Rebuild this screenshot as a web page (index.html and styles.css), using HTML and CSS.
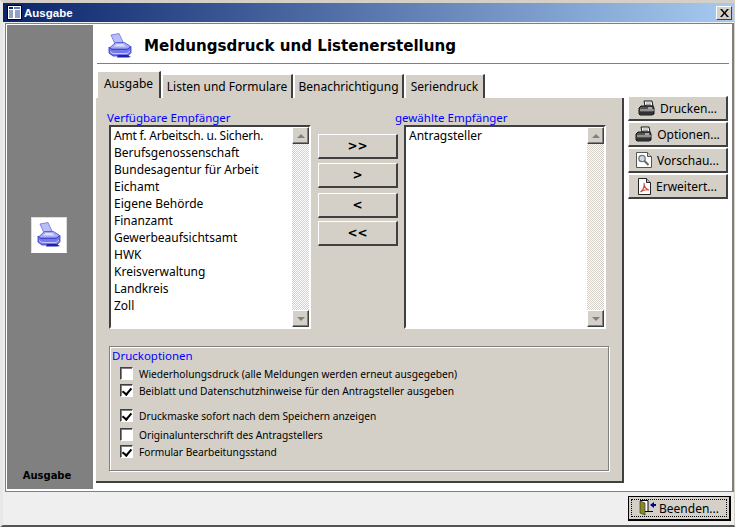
FILE: index.html
```html
<!DOCTYPE html>
<html lang="de">
<head>
<meta charset="utf-8">
<title>Ausgabe</title>
<link rel="stylesheet" href="styles.css">
</head>
<body>
<svg class="defs" width="0" height="0">
  <defs>
    <symbol id="blue-printer" viewBox="0 0 24 26">
      <path d="M3 2l8-1.500 4 8.500-8 2z" fill="#b9bdf8" stroke="#6a70e0" stroke-width=".8"/>
      <path d="M1.500 15l6-5.500h9L22 13v3H1.500z" fill="#a5a9f3" stroke="#4a50d0" stroke-width=".8"/>
      <path d="M6 13l3-2h6l3 2.500H7z" fill="#dcdefc"/>
      <path d="M1 14l3 2.500h15l4-3v6l-3 3.500H5l-4-3z" fill="#7379ea" stroke="#2c32c0" stroke-width=".8"/>
      <path d="M2 18.500l3 2h14l3-2.500" fill="none" stroke="#c3c6fa"/>
      <path d="M10 22h9l4 2-3 .500H9z" fill="#1d22a8"/>
    </symbol>
    <symbol id="black-printer" viewBox="0 0 17 16">
      <path d="M6 1h8l1 5H7z" fill="#fff" stroke="#000" stroke-width=".9"/>
      <path d="M8 3h5M8 4.500h5" stroke="#777" stroke-width=".7"/>
      <path d="M3 6h12l1 2v6l-2 1H2l-1-1V8z" fill="#555" stroke="#000" stroke-width=".9"/>
      <path d="M2 10h14" stroke="#d4d0c8"/>
      <path d="M10 8h4" stroke="#fff"/>
      <path d="M2 13h14" stroke="#111"/>
    </symbol>
  </defs>
</svg>
<div class="window">
  <header class="titlebar">
    <svg class="app-icon" width="15" height="15" viewBox="0 0 15 15">
      <rect x=".5" y=".5" width="14" height="14" fill="#fff" stroke="#000"/>
      <rect x="2" y="2" width="4" height="2" fill="#0a246a"/>
      <rect x="7" y="2" width="6" height="2" fill="#5a7cc0"/>
      <path d="M2 6h4M2 8h4M2 10h4M2 12h4M8 6h5M8 8h5M8 10h5M8 12h5" stroke="#26408c"/>
    </svg>
    <span class="title-text">Ausgabe</span>
    <button class="close-btn" type="button" aria-label="Schließen">
      <svg width="9" height="8" viewBox="0 0 9 8"><path d="M0 0h2l2.500 3L7 0h2L5.500 4 9 8H7L4.500 5 2 8H0l3.500-4z" fill="#000"/></svg>
    </button>
  </header>

  <div class="frame">
    <aside class="sidebar">
      <div class="side-icon"><svg width="24" height="26"><use href="#blue-printer"/></svg></div>
      <div class="side-label">Ausgabe</div>
    </aside>

    <main class="content">
      <div class="heading">
        <svg width="24" height="26"><use href="#blue-printer"/></svg>
        <h1>Meldungsdruck und Listenerstellung</h1>
      </div>

      <div class="workarea">
        <section class="tabs-col">
          <nav class="tabs">
            <span class="tab active">Ausgabe</span>
            <span class="tab t-listen">Listen und Formulare</span>
            <span class="tab t-benach">Benachrichtigung</span>
            <span class="tab t-serie">Seriendruck</span>
          </nav>

          <div class="panel">
            <div class="lists">
              <div class="list-col">
                <div class="caption">Verfügbare Empfänger</div>
                <div class="listbox">
                  <ul>
                    <li class="tight">Amt f. Arbeitsch. u. Sicherh.</li>
                    <li>Berufsgenossenschaft</li>
                    <li>Bundesagentur für Arbeit</li>
                    <li>Eichamt</li>
                    <li>Eigene Behörde</li>
                    <li>Finanzamt</li>
                    <li>Gewerbeaufsichtsamt</li>
                    <li>HWK</li>
                    <li>Kreisverwaltung</li>
                    <li>Landkreis</li>
                    <li>Zoll</li>
                  </ul>
                  <div class="scrollbar">
                    <span class="sb-btn"><i class="arrow-up"></i></span>
                    <span class="sb-track"></span>
                    <span class="sb-btn"><i class="arrow-down"></i></span>
                  </div>
                </div>
              </div>

              <div class="move-col">
                <button class="move" type="button">&gt;&gt;</button>
                <button class="move" type="button">&gt;</button>
                <button class="move m3" type="button">&lt;</button>
                <button class="move m4" type="button">&lt;&lt;</button>
              </div>

              <div class="list-col right">
                <div class="caption">gewählte Empfänger</div>
                <div class="listbox">
                  <ul>
                    <li>Antragsteller</li>
                  </ul>
                  <div class="scrollbar">
                    <span class="sb-btn"><i class="arrow-up"></i></span>
                    <span class="sb-track"></span>
                    <span class="sb-btn"><i class="arrow-down"></i></span>
                  </div>
                </div>
              </div>
            </div>

            <fieldset class="options">
              <div class="caption opt-title">Druckoptionen</div>
              <div class="opt"><span class="check"></span>Wiederholungsdruck (alle Meldungen werden erneut ausgegeben)</div>
              <div class="opt"><span class="check on"></span>Beiblatt und Datenschutzhinweise für den Antragsteller ausgeben</div>
              <div class="opt gap"><span class="check on"></span>Druckmaske sofort nach dem Speichern anzeigen</div>
              <div class="opt gap2"><span class="check"></span>Originalunterschrift des Antragstellers</div>
              <div class="opt"><span class="check on"></span>Formular Bearbeitungsstand</div>
            </fieldset>
          </div>
        </section>

        <div class="actions">
          <button class="action" type="button"><svg width="17" height="16"><use href="#black-printer"/></svg><span>Drucken...</span></button>
          <button class="action" type="button"><svg width="17" height="16"><use href="#black-printer"/></svg><span>Optionen...</span></button>
          <button class="action" type="button">
            <svg width="16" height="16" viewBox="0 0 16 16"><path d="M.5.500h11l4 4v11H.5z" fill="#fff" stroke="#555"/><path d="M11.500.500v4h4" fill="#ccc" stroke="#555"/><circle cx="6" cy="6.500" r="3.200" fill="#cfd8e8" stroke="#777" stroke-width="1.300"/><path d="M8.500 9l4 4" stroke="#666" stroke-width="2"/></svg>
            <span>Vorschau...</span></button>
          <button class="action" type="button">
            <svg width="13" height="17" viewBox="0 0 13 17"><path d="M.5.500h8l4 4v12H.5z" fill="#fff" stroke="#222"/><path d="M8.500.500v4h4" fill="#bbb" stroke="#222"/><path d="M2.500 14C5 12 6.500 8 6 5c0 3 2 6 5 7-3-.5-6 0-8.500 2z" fill="none" stroke="#d8443c" stroke-width="1.100"/></svg>
            <span>Erweitert...</span></button>
        </div>
      </div>
    </main>
  </div>

  <footer class="footer">
    <button class="quit" type="button">
      <span class="quit-inner">
        <svg width="17" height="16" viewBox="0 0 17 16"><path d="M1 .500h8v11H1" fill="#fff" stroke="#000"/><path d="M1 1l5 2v12l-5-2z" fill="#8a8a20" stroke="#333" stroke-width=".7"/><path d="M9 11.500H14" stroke="#000"/><path d="M11 5l4-3v2h2v2h-2v2z" fill="#00008b"/></svg>
        <span>Beenden...</span>
      </span>
    </button>
  </footer>
</div>
</body>
</html>
```
FILE: styles.css
```css
* { box-sizing: border-box; }
html, body { margin: 0; padding: 0; }
body {
  width: 735px;
  height: 527px;
  overflow: hidden;
  font-family: Tahoma, "Noto Sans", "Liberation Sans", sans-serif;
  font-size: 12px;
  color: #000;
}
.defs { display: block; height: 0; }

.window {
  width: 735px;
  height: 527px;
  display: flex;
  flex-direction: column;
  background: #efefef;
  border-top: 3px solid #d4d0c8;
  border-left: 3px solid #e8e8e8;
  border-right: 1px solid #d4d0c8;
  border-bottom: 2px solid #555;
}

.titlebar {
  height: 19px;
  flex: none;
  display: flex;
  align-items: center;
  padding: 0 2px 0 4px;
  background: linear-gradient(90deg, #0a246a, #a6caf0);
  color: #fff;
}
.app-icon { flex: none; margin-right: 2px; }
.title-text { font: bold 11.500px "Liberation Sans", sans-serif; flex: 1; }
.close-btn {
  width: 16px;
  height: 14px;
  padding: 0;
  display: flex;
  align-items: center;
  justify-content: center;
  background: #d4d0c8;
  border: 1px solid;
  border-color: #fff #404040 #404040 #fff;
}

.frame {
  flex: none;
  height: 469px;
  margin: 1px 0 0 2px;
  display: flex;
  padding: 1px;
  background: #fff;
  border: 1px solid #808080;
  border-right: 2px solid #808080;
}

.sidebar {
  width: 86px;
  margin-right: 3px;
  height: 464px;
  flex: none;
  background: #808080;
  display: flex;
  flex-direction: column;
  align-items: center;
  padding: 192px 6px 0 0;
}
.side-icon {
  width: 36px;
  height: 36px;
  display: flex;
  align-items: center;
  justify-content: center;
  background: #fff;
  border: 1px solid #ddd;
  border-bottom-color: #fff;
  margin-left: 4px;
}
.side-label {
  margin-top: auto;
  margin-bottom: 8px;
  font: bold 10px "DejaVu Sans", sans-serif;
  color: #000;
}

.content { flex: 1; min-width: 0; display: flex; flex-direction: column; }

.heading {
  height: 39px;
  margin: 0 2px 0 1px;
  padding: 3px 0 0 11px;
  display: flex;
  align-items: center;
  gap: 12px;
  border-bottom: 1px solid #808080;
  flex: none;
}
.heading h1 {
  margin: 0;
  font: bold 15.100px "DejaVu Sans", sans-serif;
}

.workarea { display: flex; gap: 4px; margin-top: 7px; }
.tabs-col { width: 528px; flex: none; }

.tabs { display: flex; height: 27px; align-items: flex-end; padding-left: 1px; }
.tab {
  height: 24px;
  margin-right: 1px;
  display: flex;
  align-items: center;
  justify-content: center;
  background: #d4d0c8;
  border-top: 1px solid #fff;
  border-left: 1px solid #fff;
  border-right: 2px solid #404040;
}
.tab.active { width: 64px; height: 27px; padding-bottom: 3px; }
.t-listen { width: 131px; }
.t-benach { width: 110px; }
.t-serie { width: 80px; }

.panel {
  height: 385px;
  background: #d4d0c8;
  border-right: 2px solid #404040;
  border-bottom: 2px solid #404040;
  padding: 12px 0 0 11px;
}

.lists { display: flex; height: 236px; }
.caption { color: #0000ff; line-height: 15px; font-size: 11.500px; }
.list-col { width: 204px; flex: none; display: flex; flex-direction: column; }
.list-col .listbox { margin-left: 2px; }
.list-col.right { width: 212px; margin-left: -3px; }
.list-col.right .listbox { margin-left: 9px; }

.listbox {
  width: 202px;
  height: 204px;
  background: #fff;
  display: flex;
  border: 2px solid;
  border-color: #404040 #fff #fff #404040;
}
.listbox ul { flex: 1; margin: 0; padding: 0 0 0 3px; list-style: none; }
.listbox li { height: 17px; line-height: 17px; white-space: nowrap; }
.listbox li.tight { letter-spacing: -.2px; }

.scrollbar { width: 17px; flex: none; display: flex; flex-direction: column; }
.sb-track {
  flex: 1;
  background: conic-gradient(#d4d0c8 25%, #fff 0 50%, #d4d0c8 0 75%, #fff 0) 0 0 / 2px 2px;
}
.sb-btn {
  height: 17px;
  display: flex;
  align-items: center;
  justify-content: center;
  background: #d4d0c8;
  border: 1px solid;
  border-color: #fff #404040 #404040 #fff;
  box-shadow: inset -1px -1px 0 #808080;
}
.arrow-up { border: 4px solid transparent; border-top: 0; border-bottom: 4px solid #808080; }
.arrow-down { border: 4px solid transparent; border-bottom: 0; border-top: 4px solid #808080; }

.move-col { width: 80px; flex: none; margin: 24px 0 0 7px; display: flex; flex-direction: column; gap: 4px; }
.move {
  width: 80px;
  height: 25px;
  padding: 0;
  background: #d4d0c8;
  font: bold 12px "DejaVu Sans", sans-serif;
  color: #000;
  border: 1px solid;
  border-color: #fff #404040 #404040 #fff;
  border-right-width: 2px;
  border-bottom-width: 2px;
}
.m3 { margin-top: 1px; }
.m4 { margin-top: -1px; }

.options {
  width: 501px;
  height: 126px;
  margin: 0 0 0 2px;
  padding: 0 0 0 10px;
  border: 1px solid;
  border-color: #808080 #fff #fff #808080;
  box-shadow: inset -1px -1px 0 #808080, inset 1px 1px 0 #fff;
  display: block;
}
.opt-title { margin: 1px 0 2px -8px; line-height: 15px; }
.opt {
  height: 17px;
  display: flex;
  align-items: center;
  font-size: 10.200px;
  white-space: nowrap;
}
.opt.gap { margin-top: 8px; }
.opt.gap2 { margin-top: 2px; }
.check {
  width: 13px;
  height: 13px;
  margin-right: 6px;
  flex: none;
  background: #fff;
  border: 1px solid;
  border-color: #404040 #fff #fff #404040;
  box-shadow: inset 1px 1px 0 #808080;
  position: relative;
}
.check.on::after {
  content: "";
  position: absolute;
  left: 3px;
  top: 1px;
  width: 4px;
  height: 7px;
  border: solid #000;
  border-width: 0 2px 2px 0;
  transform: rotate(40deg);
}

.actions { width: 100px; display: flex; flex-direction: column; gap: 1px; padding-top: 25px; }
.action {
  width: 100px;
  height: 25px;
  padding: 0;
  display: flex;
  align-items: center;
  justify-content: center;
  gap: 5px;
  background: #d4d0c8;
  font: 12px Tahoma, "Noto Sans", sans-serif;
  color: #000;
  border: 1px solid;
  border-color: #fff #404040 #404040 #fff;
  border-right-width: 2px;
  border-bottom-width: 2px;
}

.footer {
  flex: 1;
  display: flex;
  justify-content: flex-end;
  align-items: flex-start;
  padding: 4px 3px 0 0;
}
.quit {
  width: 103px;
  height: 25px;
  padding: 2px;
  background: #d4d0c8;
  border: 1px solid #000;
  border-right-width: 2px;
  border-bottom-width: 2px;
  font: 12px Tahoma, "Noto Sans", sans-serif;
  color: #000;
}
.quit-inner {
  height: 100%;
  display: flex;
  align-items: center;
  justify-content: center;
  gap: 3px;
  border: 1px dotted #000;
}
```
